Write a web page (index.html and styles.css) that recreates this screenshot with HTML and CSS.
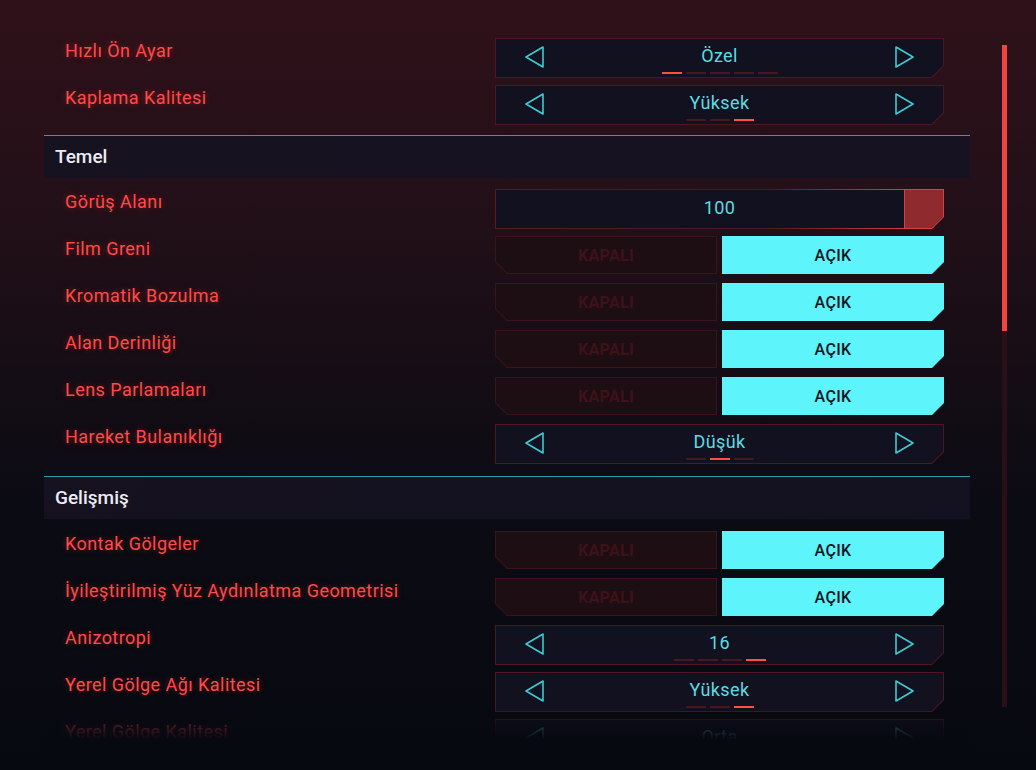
FILE: index.html
```html
<!DOCTYPE html>
<html lang="tr">
<head>
<meta charset="utf-8">
<title>Grafik Ayarları</title>
<link rel="stylesheet" href="styles.css">
</head>
<body>
<div class="screen">
  <div class="panel">
    <div class="list">
      <div class="row first">
        <div class="label">Hızlı Ön Ayar</div>
        <div class="ctl sel"><div class="ctl-in">
          <svg class="arr" viewBox="0 0 20 22"><path d="M18 1 L1 11 L18 21 Z"/></svg>
          <div class="val">Özel</div>
          <svg class="arr" viewBox="0 0 20 22"><path d="M2 1 L19 11 L2 21 Z"/></svg>
          <div class="dashes"><i class="on"></i><i></i><i></i><i></i><i></i></div>
        </div></div>
      </div>
      <div class="row">
        <div class="label">Kaplama Kalitesi</div>
        <div class="ctl sel"><div class="ctl-in">
          <svg class="arr" viewBox="0 0 20 22"><path d="M18 1 L1 11 L18 21 Z"/></svg>
          <div class="val">Yüksek</div>
          <svg class="arr" viewBox="0 0 20 22"><path d="M2 1 L19 11 L2 21 Z"/></svg>
          <div class="dashes"><i></i><i></i><i class="on"></i></div>
        </div></div>
      </div>

      <div class="section">Temel</div>

      <div class="row">
        <div class="label">Görüş Alanı</div>
        <div class="ctl slider"><div class="ctl-in">
          <div class="val num">100</div>
          <div class="handle"></div>
        </div></div>
      </div>
      <div class="row">
        <div class="label">Film Greni</div>
        <div class="toggle"><div class="off"><span>KAPALI</span></div><div class="on"><span>AÇIK</span></div></div>
      </div>
      <div class="row">
        <div class="label">Kromatik Bozulma</div>
        <div class="toggle"><div class="off"><span>KAPALI</span></div><div class="on"><span>AÇIK</span></div></div>
      </div>
      <div class="row">
        <div class="label">Alan Derinliği</div>
        <div class="toggle"><div class="off"><span>KAPALI</span></div><div class="on"><span>AÇIK</span></div></div>
      </div>
      <div class="row">
        <div class="label">Lens Parlamaları</div>
        <div class="toggle"><div class="off"><span>KAPALI</span></div><div class="on"><span>AÇIK</span></div></div>
      </div>
      <div class="row">
        <div class="label">Hareket Bulanıklığı</div>
        <div class="ctl sel"><div class="ctl-in">
          <svg class="arr" viewBox="0 0 20 22"><path d="M18 1 L1 11 L18 21 Z"/></svg>
          <div class="val">Düşük</div>
          <svg class="arr" viewBox="0 0 20 22"><path d="M2 1 L19 11 L2 21 Z"/></svg>
          <div class="dashes"><i></i><i class="on"></i><i></i></div>
        </div></div>
      </div>

      <div class="section second">Gelişmiş</div>

      <div class="row">
        <div class="label">Kontak Gölgeler</div>
        <div class="toggle"><div class="off"><span>KAPALI</span></div><div class="on"><span>AÇIK</span></div></div>
      </div>
      <div class="row">
        <div class="label">İyileştirilmiş Yüz Aydınlatma Geometrisi</div>
        <div class="toggle"><div class="off"><span>KAPALI</span></div><div class="on"><span>AÇIK</span></div></div>
      </div>
      <div class="row">
        <div class="label">Anizotropi</div>
        <div class="ctl sel"><div class="ctl-in">
          <svg class="arr" viewBox="0 0 20 22"><path d="M18 1 L1 11 L18 21 Z"/></svg>
          <div class="val">16</div>
          <svg class="arr" viewBox="0 0 20 22"><path d="M2 1 L19 11 L2 21 Z"/></svg>
          <div class="dashes"><i></i><i></i><i></i><i class="on"></i></div>
        </div></div>
      </div>
      <div class="row">
        <div class="label">Yerel Gölge Ağı Kalitesi</div>
        <div class="ctl sel"><div class="ctl-in">
          <svg class="arr" viewBox="0 0 20 22"><path d="M18 1 L1 11 L18 21 Z"/></svg>
          <div class="val">Yüksek</div>
          <svg class="arr" viewBox="0 0 20 22"><path d="M2 1 L19 11 L2 21 Z"/></svg>
          <div class="dashes"><i></i><i></i><i class="on"></i></div>
        </div></div>
      </div>
      <div class="row">
        <div class="label">Yerel Gölge Kalitesi</div>
        <div class="ctl sel"><div class="ctl-in">
          <svg class="arr" viewBox="0 0 20 22"><path d="M18 1 L1 11 L18 21 Z"/></svg>
          <div class="val">Orta</div>
          <svg class="arr" viewBox="0 0 20 22"><path d="M2 1 L19 11 L2 21 Z"/></svg>
          <div class="dashes"><i></i><i class="on"></i><i></i></div>
        </div></div>
      </div>
    </div>
    <div class="fade"></div>
  </div>
  <div class="scroll"><div class="thumb"></div></div>
</div>
</body>
</html>
```
FILE: styles.css
```css
* { box-sizing: border-box; }
html, body { margin: 0; padding: 0; }
body {
  width: 1036px;
  height: 770px;
  overflow: hidden;
  background: linear-gradient(180deg, #2f1119 0px, #231018 200px, #160d15 360px, #0b0b13 500px, #070911 770px);
  font-family: Roboto, "Noto Sans", sans-serif;
}
.screen {
  display: flex;
  height: 770px;
}
.panel {
  position: relative;
  width: 926px;
  margin-left: 44px;
  height: 748px;
  overflow: hidden;
}
.list {
  display: flex;
  flex-direction: column;
}
.row {
  display: grid;
  grid-template-columns: 1fr 449px;
  height: 47px;
  padding: 4px 26px 3px 21px;
}
.row.first { margin-top: 34px; }
.label {
  color: #ff4a47;
  font-size: 18px;
  font-weight: 400;
  line-height: 22px;
  padding-top: 2px;
  letter-spacing: 0.45px;
  text-shadow: 0 0 6px rgba(255, 50, 50, 0.4);
  white-space: nowrap;
}
.section {
  margin-top: 7px;
  margin-bottom: 7px;
  height: 43px;
  border-top: 1px solid #2a9fa6;
  background: linear-gradient(90deg, rgba(22, 18, 32, 0.95), rgba(20, 18, 34, 0.9));
  color: #ececf4;
  font-size: 19px;
  font-weight: 500;
  line-height: 42px;
  padding-left: 11px;
}
.section.second { margin-top: 9px; margin-bottom: 8px; }

/* chamfered control */
.ctl {
  height: 40px;
  padding: 1px;
  background: #4d1620;
  clip-path: polygon(0 0, 100% 0, 100% calc(100% - 12px), calc(100% - 12px) 100%, 0 100%);
}
.ctl-in {
  position: relative;
  height: 100%;
  background: #12111f;
  clip-path: polygon(0 0, 100% 0, 100% calc(100% - 11.5px), calc(100% - 11.5px) 100%, 0 100%);
  display: flex;
  align-items: center;
  justify-content: space-between;
  padding: 0 29px 4px 29px;
}
.arr {
  width: 20px;
  height: 22px;
  fill: none;
  stroke: #3ecad3;
  stroke-width: 1.6;
  stroke-linejoin: round;
}
.sel .arr { margin-top: 2px; }
.val {
  color: #5cdbe3;
  font-size: 18px;
  font-weight: 400;
  line-height: 22px;
  letter-spacing: 0.4px;
}
.dashes {
  position: absolute;
  left: 0;
  right: 0;
  top: 33px;
  display: flex;
  justify-content: center;
  gap: 4px;
}
.dashes i {
  display: block;
  width: 20px;
  height: 2px;
  background: #4a1720;
}
.dashes i.on { background: #ff4f46; }

.slider .ctl-in {
  justify-content: center;
  padding: 0 0 2px 0;
}
.handle {
  position: absolute;
  right: 0;
  top: 0;
  bottom: 0;
  width: 39px;
  background: #8f2b2e;
  border-left: 1px solid #d8403d;
}
.slider { background: linear-gradient(90deg, #5a1a22, #4a1620 60%, #d8403d 92%); }

.toggle {
  display: flex;
  gap: 5px;
  height: 38px;
}
.toggle .off, .toggle .on {
  flex: 1;
  display: flex;
  align-items: center;
  justify-content: center;
  font-size: 16px;
  letter-spacing: 0.3px;
}
.toggle .off {
  position: relative;
  font-weight: 700;
  background: #3a141a;
  clip-path: polygon(0 0, 100% 0, 100% 100%, 12px 100%, 0 calc(100% - 12px));
}
.toggle .off::before {
  content: "";
  position: absolute;
  inset: 1px;
  background: #1d0e13;
  clip-path: polygon(0 0, 100% 0, 100% 100%, 11.5px 100%, 0 calc(100% - 11.5px));
}
.toggle .off span { position: relative; color: #3f1219; }
.toggle .on {
  font-weight: 500;
  background: #5ef4fb;
  color: #12131c;
  clip-path: polygon(0 0, 100% 0, 100% calc(100% - 12px), calc(100% - 12px) 100%, 0 100%);
}

.fade {
  position: absolute;
  left: 0;
  right: 0;
  bottom: 0;
  height: 40px;
  background: linear-gradient(180deg, rgba(7, 9, 17, 0) 0%, rgba(7, 9, 17, 0.7) 40%, #070911 80%);
}

.scroll {
  margin-left: 32px;
  margin-top: 45px;
  width: 5px;
  height: 662px;
  background: #2a1016;
}
.thumb {
  height: 286px;
  background: #ef4440;
}
```
